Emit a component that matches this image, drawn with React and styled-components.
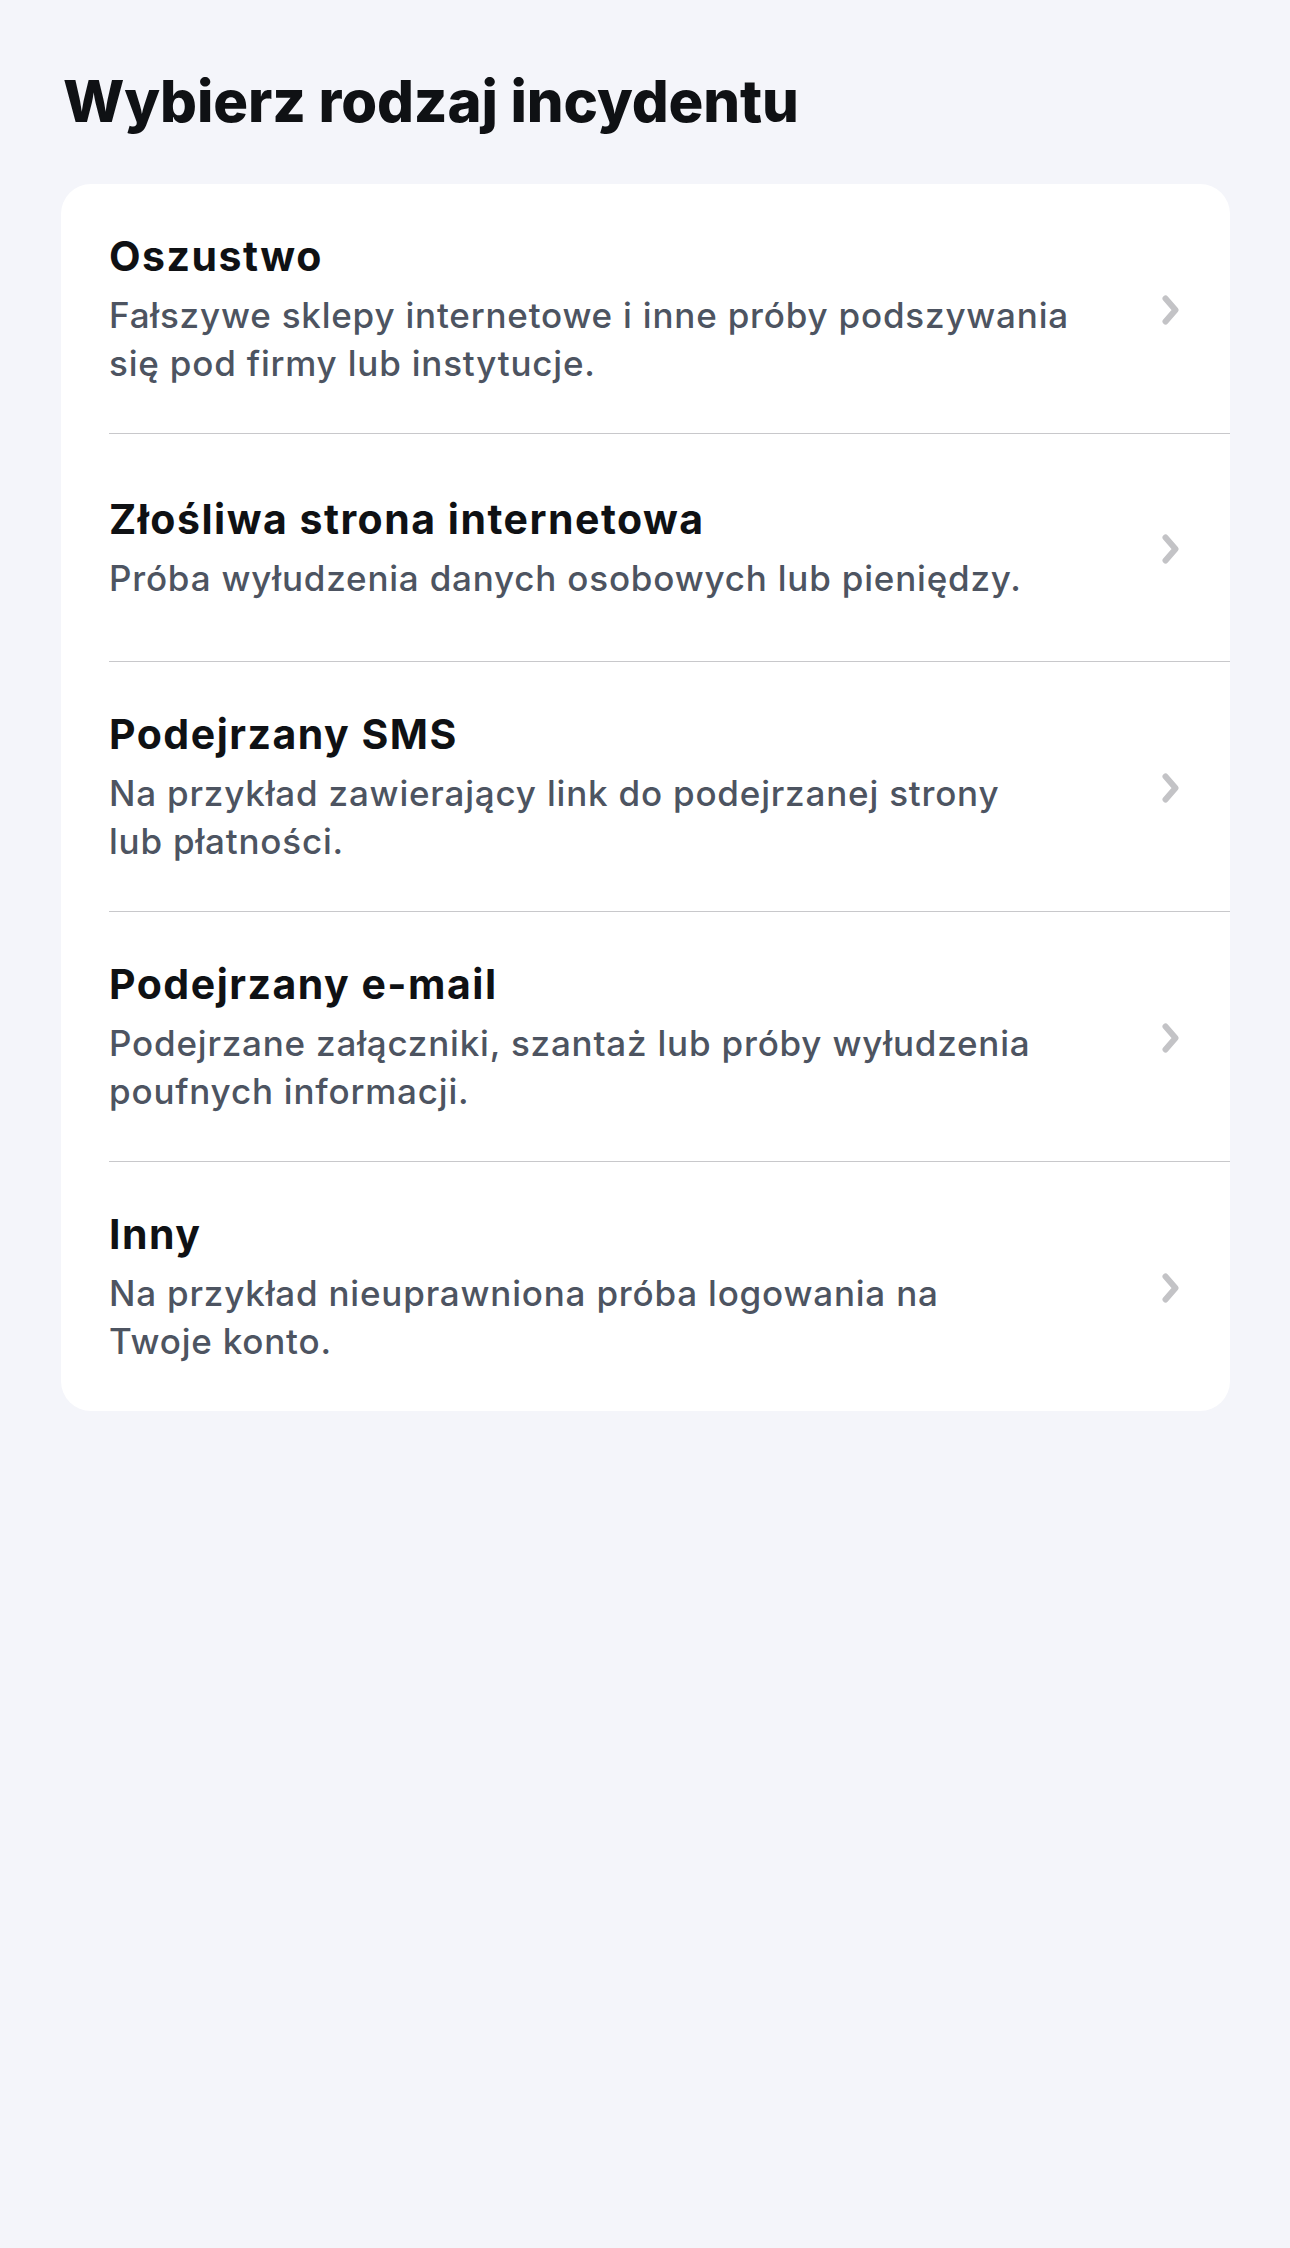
import styled, { createGlobalStyle } from 'styled-components'

// Styles globaux : fond de la page et police
const GlobalStyle = createGlobalStyle`
  html, body {
    margin: 0;
    padding: 0;
    background: #f4f5fa;
    font-family: Inter, "Noto Sans", "Liberation Sans", sans-serif;
    -webkit-font-smoothing: antialiased;
  }
`

const incidents = [
  {
    title: 'Oszustwo',
    lines: [
      'Fałszywe sklepy internetowe i inne próby podszywania',
      'się pod firmy lub instytucje.',
    ],
  },
  {
    title: 'Złośliwa strona internetowa',
    lines: ['Próba wyłudzenia danych osobowych lub pieniędzy.'],
  },
  {
    title: 'Podejrzany SMS',
    lines: ['Na przykład zawierający link do podejrzanej strony', 'lub płatności.'],
  },
  {
    title: 'Podejrzany e-mail',
    lines: [
      'Podejrzane załączniki, szantaż lub próby wyłudzenia',
      'poufnych informacji.',
    ],
  },
  {
    title: 'Inny',
    lines: ['Na przykład nieuprawniona próba logowania na', 'Twoje konto.'],
  },
]

const Page = styled.main`
  min-height: 2248px;
  box-sizing: border-box;
  padding: 66px 60px 0 61px;
`

const Heading = styled.h1`
  margin: 0 0 48px 2px;
  font-size: 58px;
  line-height: 70px;
  font-weight: 800;
  letter-spacing: -0.1px;
  color: #0f1114;
`

const Card = styled.section`
  background: #ffffff;
  border-radius: 30px;
  overflow: hidden;
`

const Item = styled.button`
  display: block;
  width: 100%;
  padding: 0 0 0 48px;
  margin: 0;
  border: 0;
  background: transparent;
  text-align: left;
  font: inherit;
  cursor: pointer;
`

const ItemInner = styled.div`
  display: flex;
  align-items: center;
  gap: 24px;
  box-sizing: border-box;
  min-height: 228px;
  padding: 48px 51px 46px 0;
  border-bottom: ${({ $last }) => ($last ? '0' : '1.5px solid #c8c8cb')};
`

const Texts = styled.div`
  flex: 1;
  min-width: 0;
`

const ItemTitle = styled.div`
  font-size: 41px;
  line-height: 48px;
  font-weight: 700;
  letter-spacing: 1.5px;
  color: #0f1114;
`

const ItemDesc = styled.div`
  margin-top: 11px;
  font-size: 35px;
  line-height: 48px;
  font-weight: 500;
  letter-spacing: 0.8px;
  color: #4d5461;
  white-space: nowrap;
`

const Chevron = styled.svg`
  flex: none;
  width: 17px;
  height: 30px;
`

function ChevronIcon() {
  return (
    <Chevron viewBox="0 0 17 30" fill="none">
      <polyline
        points="3.5,3.5 13.5,15 3.5,26.5"
        stroke="#c3c3c6"
        strokeWidth="6"
        strokeLinecap="round"
        strokeLinejoin="round"
      />
    </Chevron>
  )
}

function App() {
  return (
    <>
      <GlobalStyle />
      <Page>
        <Heading>Wybierz rodzaj incydentu</Heading>
        <Card>
          {incidents.map((item, i) => (
            <Item key={item.title} type="button">
              <ItemInner $last={i === incidents.length - 1}>
                <Texts>
                  <ItemTitle>{item.title}</ItemTitle>
                  <ItemDesc>
                    {item.lines.map((line, j) => (
                      <div key={j}>{line}</div>
                    ))}
                  </ItemDesc>
                </Texts>
                <ChevronIcon />
              </ItemInner>
            </Item>
          ))}
        </Card>
      </Page>
    </>
  )
}

export default App
